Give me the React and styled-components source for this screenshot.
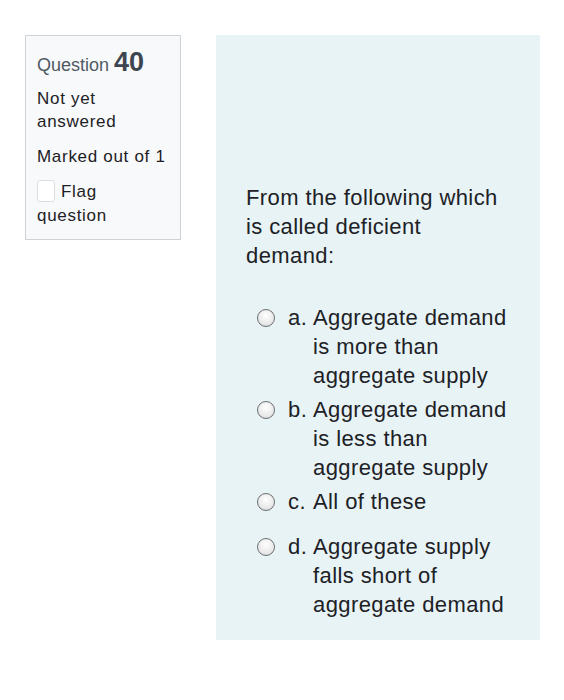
import React from "react";
import styled, { createGlobalStyle } from "styled-components";

const Global = createGlobalStyle`
  body {
    margin: 0;
    background: #fff;
    font-family: "Liberation Sans", Arial, sans-serif;
    color: #1d2125;
  }
`;

const options = [
  { letter: "a.", text: "Aggregate demand is more than aggregate supply" },
  { letter: "b.", text: "Aggregate demand is less than aggregate supply" },
  { letter: "c.", text: "All of these", extra: true },
  { letter: "d.", text: "Aggregate supply falls short of aggregate demand" },
];

export default function App() {
  return (
    <>
      <Global />
      <Page>
        <Info>
          <QNo>
            Question <strong>40</strong>
          </QNo>
          <State>Not yet answered</State>
          <Grade>Marked out of 1</Grade>
          <Flag>
            <Check />
            Flag question
          </Flag>
        </Info>
        <Content>
          <QText>From the following which is called deficient demand:</QText>
          <Answers>
            {options.map((o) => (
              <Option key={o.letter} $extra={o.extra}>
                <Radio />
                <Letter>{o.letter}</Letter>
                <Label>{o.text}</Label>
              </Option>
            ))}
          </Answers>
        </Content>
      </Page>
    </>
  );
}

const Page = styled.div`
  display: flex;
  align-items: flex-start;
  gap: 35px;
  padding: 35px 24px 0 25px;
`;

const Info = styled.div`
  width: 156px;
  box-sizing: border-box;
  background: #f8f9fa;
  border: 1px solid #cfd3d6;
  padding: 11px 11px 11px 11px;
  color: #1d2125;
`;

const QNo = styled.div`
  font-size: 18px;
  color: #4f5a64;
  line-height: 30px;
  margin-bottom: 7px;
  strong {
    font-size: 27px;
    font-weight: bold;
    color: #3d4650;
  }
`;

const State = styled.div`
  font-size: 17px;
  letter-spacing: 0.7px;
  line-height: 23px;
  margin-bottom: 12px;
`;

const Grade = styled(State)``;

const Flag = styled.div`
  font-size: 17px;
  letter-spacing: 0.7px;
  line-height: 24px;
`;

const Check = styled.span`
  display: inline-block;
  width: 18px;
  height: 22px;
  box-sizing: border-box;
  border: 1px solid #dcdfe2;
  border-radius: 3px;
  background: #fff;
  vertical-align: -5px;
  margin-right: 6px;
`;

const Content = styled.div`
  width: 324px;
  height: 605px;
  box-sizing: border-box;
  background: #e7f3f5;
  padding: 148px 20px 0 30px;
`;

const QText = styled.div`
  max-width: 256px;
  font-size: 22px;
  letter-spacing: 0.4px;
  line-height: 29px;
  margin-bottom: 33px;
`;

const Answers = styled.div`
  display: flex;
  flex-direction: column;
  padding-left: 11px;
`;

const Option = styled.div`
  display: flex;
  align-items: flex-start;
  font-size: 22px;
  letter-spacing: 0.4px;
  line-height: 29px;
  margin-bottom: ${(p) => (p.$extra ? "16px" : "5px")};
`;

const Radio = styled.span`
  flex: none;
  width: 18px;
  height: 18px;
  box-sizing: border-box;
  border-radius: 50%;
  border: 1px solid #6b6f73;
  background: radial-gradient(circle at 50% 35%, #ffffff 0%, #e8e8e8 65%, #cfcfcf 100%);
  margin-top: 6px;
  margin-right: 13px;
`;

const Letter = styled.span`
  flex: none;
  width: 25px;
`;

const Label = styled.span`
  width: 200px;
`;
